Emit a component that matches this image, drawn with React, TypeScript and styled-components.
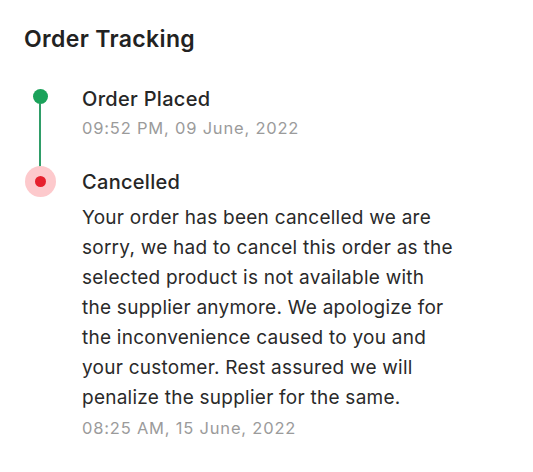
import React from "react"
import styled, { createGlobalStyle } from "styled-components"

const GlobalStyle = createGlobalStyle`
  html, body {
    margin: 0;
    padding: 0;
    background: #ffffff;
  }
  body {
    font-family: Inter, "Noto Sans", sans-serif;
    -webkit-font-smoothing: antialiased;
  }
`

type Step = {
  title: string
  time: string
  note?: string
  status: "done" | "cancelled"
}

const steps: Step[] = [
  {
    title: "Order Placed",
    time: "09:52 PM, 09 June, 2022",
    status: "done",
  },
  {
    title: "Cancelled",
    time: "08:25 AM, 15 June, 2022",
    status: "cancelled",
    note:
      "Your order has been cancelled we are sorry, we had to cancel this order as the selected product is not available with the supplier anymore. We apologize for the inconvenience caused to you and your customer. Rest assured we will penalize the supplier for the same.",
  },
]

const Page = styled.div`
  padding: 25px 40px 0 24px;
  height: 472px;
  box-sizing: border-box;
  overflow: hidden;
`

const Heading = styled.h2`
  margin: 0 0 32px;
  font-size: 23px;
  line-height: 28px;
  font-weight: 600;
  color: #222222;
  letter-spacing: 0.35px;
`

const Timeline = styled.div`
  display: flex;
  flex-direction: column;
`

const Item = styled.div<{ $last: boolean }>`
  display: grid;
  grid-template-columns: 32px 1fr;
  column-gap: 26px;
  padding-bottom: ${p => (p.$last ? "0" : "29px")};
  position: relative;
`

const Rail = styled.div`
  display: flex;
  flex-direction: column;
  align-items: center;
`

const Dot = styled.span`
  width: 15px;
  height: 15px;
  border-radius: 50%;
  background: #1aa25a;
  margin-top: 4px;
  flex: none;
`

const Halo = styled.span`
  width: 31px;
  height: 31px;
  border-radius: 50%;
  background: #fdc9cc;
  margin-top: -2px;
  display: flex;
  align-items: center;
  justify-content: center;
  flex: none;
  &::after {
    content: "";
    width: 11px;
    height: 11px;
    border-radius: 50%;
    background: #e6202d;
  }
`

const Connector = styled.span`
  position: absolute;
  left: 15px;
  top: 18px;
  bottom: -2px;
  width: 2px;
  background: #2f9d68;
`

const Body = styled.div`
  display: flex;
  flex-direction: column;
`

const Title = styled.div`
  font-size: 20px;
  line-height: 28px;
  font-weight: 500;
  color: #262626;
  letter-spacing: 0.3px;
`

const Note = styled.p`
  margin: 7px 0 0;
  max-width: 374px;
  font-size: 19px;
  line-height: 30px;
  font-weight: 400;
  color: #2a2a2a;
  letter-spacing: 0.25px;
`

const Time = styled.div`
  margin-top: 4px;
  font-size: 16.5px;
  line-height: 22px;
  color: #9b9b9b;
  letter-spacing: 0.8px;
`

export default function App() {
  return (
    <>
      <GlobalStyle />
      <Page>
        <Heading>Order Tracking</Heading>
        <Timeline>
          {steps.map((s, i) => {
            const last = i === steps.length - 1
            return (
              <Item key={s.title} $last={last}>
                <Rail>
                  {s.status === "done" ? <Dot /> : <Halo />}
                  {!last && <Connector />}
                </Rail>
                <Body>
                  <Title>{s.title}</Title>
                  {s.note && <Note>{s.note}</Note>}
                  <Time>{s.time}</Time>
                </Body>
              </Item>
            )
          })}
        </Timeline>
      </Page>
    </>
  )
}
